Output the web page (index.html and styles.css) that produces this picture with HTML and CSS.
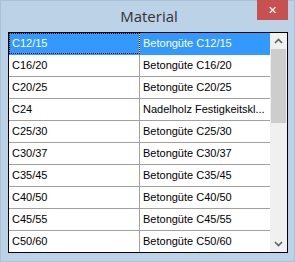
FILE: index.html
```html
<!DOCTYPE html>
<html lang="de">
<head>
  <meta charset="UTF-8">
  <title>Material</title>
  <link rel="stylesheet" href="styles.css">
</head>
<body>
  <div class="fenster">
    <div class="titelleiste">
      <span></span>
      <span class="titel">Material</span>
      <span class="schliessen-box"><span class="schliessen">&#x2715;</span></span>
    </div>

    <div class="liste">
      <div class="zeilen">
        <div class="zeile aktiv"><span class="zelle fokus">C12/15</span><span class="zelle">Betongüte C12/15</span></div>
        <div class="zeile"><span class="zelle">C16/20</span><span class="zelle">Betongüte C16/20</span></div>
        <div class="zeile"><span class="zelle">C20/25</span><span class="zelle">Betongüte C20/25</span></div>
        <div class="zeile"><span class="zelle">C24</span><span class="zelle">Nadelholz Festigkeitskl...</span></div>
        <div class="zeile"><span class="zelle">C25/30</span><span class="zelle">Betongüte C25/30</span></div>
        <div class="zeile"><span class="zelle">C30/37</span><span class="zelle">Betongüte C30/37</span></div>
        <div class="zeile"><span class="zelle">C35/45</span><span class="zelle">Betongüte C35/45</span></div>
        <div class="zeile"><span class="zelle">C40/50</span><span class="zelle">Betongüte C40/50</span></div>
        <div class="zeile"><span class="zelle">C45/55</span><span class="zelle">Betongüte C45/55</span></div>
        <div class="zeile"><span class="zelle">C50/60</span><span class="zelle">Betongüte C50/60</span></div>
      </div>

      <div class="scrollbar">
        <div class="pfeil">
          <svg width="9" height="6" viewBox="0 0 9 6"><path d="M1 5 L4.5 1.5 L8 5" fill="none" stroke="#606060" stroke-width="1.6"/></svg>
        </div>
        <div class="spur">
          <div class="daumen"></div>
        </div>
        <div class="pfeil">
          <svg width="9" height="6" viewBox="0 0 9 6"><path d="M1 1 L4.5 4.5 L8 1" fill="none" stroke="#606060" stroke-width="1.6"/></svg>
        </div>
      </div>
    </div>
  </div>
</body>
</html>
```

FILE: styles.css
```css
/* Fenster im Stil von Windows 8 */
:root {
  --rahmen: #bcd2e7;
  --rahmen-kante: #a9c1d9;
  --auswahl: #3399ff;
  --linie: #a0a0a0;
  --scroll-bg: #f0f0f0;
  --daumen: #cdcdcd;
}

body {
  margin: 0;
  font-family: "Liberation Sans", Arial, sans-serif;
}

.fenster {
  width: 295px;
  height: 262px;
  box-sizing: border-box;
  background-color: var(--rahmen);
  border: 1px solid var(--rahmen-kante);
  display: flex;
  flex-direction: column;
}

.titelleiste {
  height: 30px;
  display: grid;
  grid-template-columns: 1fr auto 1fr;
  align-items: start;
}

.titel {
  font-family: "Open Sans", "Noto Sans", sans-serif;
  font-size: 15px;
  color: #333;
  margin-top: 5px;
  margin-left: 3px;
}

.schliessen-box {
  display: flex;
  justify-content: flex-end;
  padding-right: 6px;
  margin-top: -1px;
}

.schliessen {
  width: 31px;
  height: 20px;
  background-color: #c75050;
  color: #fff;
  font-size: 11px;
  font-weight: bold;
  display: flex;
  align-items: center;
  justify-content: center;
  font-family: "DejaVu Sans", sans-serif;
}

.liste {
  margin-left: 7px;
  margin-top: 1px;
  width: 280px;
  height: 221px;
  box-sizing: border-box;
  border: 1px solid #000;
  background-color: #fff;
  display: flex;
}

.zeilen {
  width: 261px;
  overflow: hidden;
}

.zeile {
  display: grid;
  grid-template-columns: 131px 130px;
  height: 22px;
  box-sizing: border-box;
  border-bottom: 1px solid var(--linie);
  font-size: 11px;
  color: #000;
}

.zelle {
  padding-left: 3px;
  line-height: 21px;
  white-space: nowrap;
  overflow: hidden;
}

.zelle:first-child {
  border-right: 1px solid var(--linie);
}

.zeile.aktiv {
  background-color: var(--auswahl);
  color: #fff;
  border-bottom-color: var(--auswahl);
}

.zeile.aktiv .zelle:first-child {
  border-right-color: #fff;
}

.zelle.fokus {
  outline: 1px dotted #000;
  outline-offset: -1px;
}

.scrollbar {
  width: 17px;
  background-color: var(--scroll-bg);
  display: flex;
  flex-direction: column;
}

.pfeil {
  height: 16px;
  display: flex;
  align-items: center;
  justify-content: center;
}

.spur {
  flex: 1;
  padding: 0 1px;
}

.daumen {
  height: 74px;
  background-color: var(--daumen);
}
```
